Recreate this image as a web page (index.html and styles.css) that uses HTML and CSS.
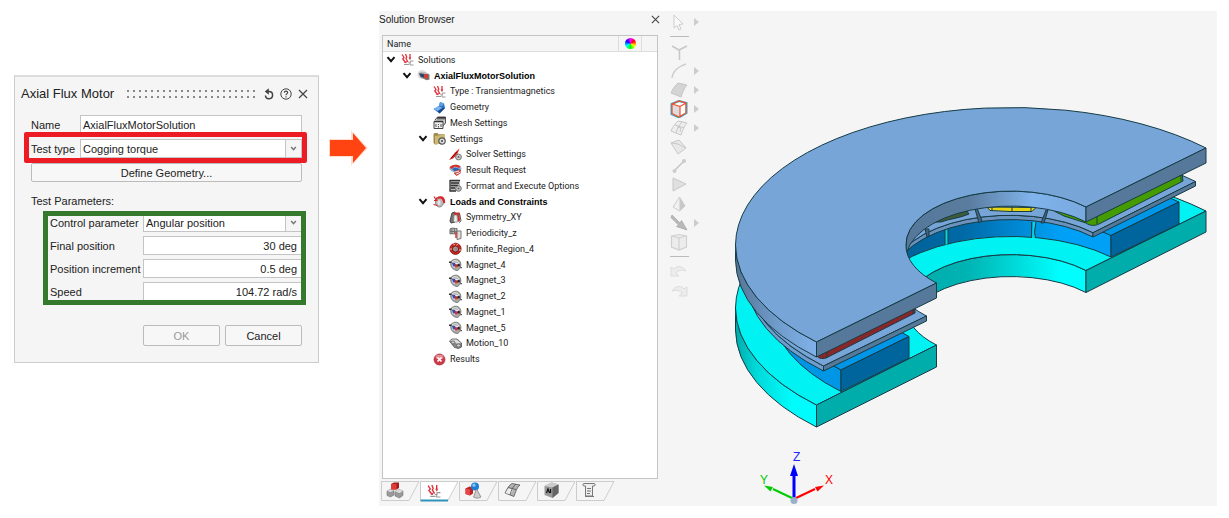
FILE: index.html
```html
<!DOCTYPE html>
<html lang="en">
<head>
<meta charset="utf-8">
<title>Axial Flux Motor</title>
<link rel="stylesheet" href="styles.css">
</head>
<body>
<svg class="defs" aria-hidden="true">
  <symbol id="i-chev" viewBox="0 0 8 6"><path d="M1 1l3 3.4L7 1" fill="none" stroke="#111" stroke-width="1.7"/></symbol>
  <symbol id="i-drop" viewBox="0 0 8 6"><path d="M1.2 1.2L4 4.4l2.800-3.200" fill="none" stroke="#777" stroke-width="1.800"/></symbol>
  <symbol id="i-close" viewBox="0 0 10 10"><path d="M1 1l8 8M9 1L1 9" fill="none" stroke="#444" stroke-width="1.200"/></symbol>
  <symbol id="i-wave" viewBox="0 0 13 13"><path d="M1 1.500l2 3-1.200 1.500L4.500 9.500M4.500 1l1.200 3-.7 1.500 2 3.500M9 1v5" fill="none" stroke="#e0303a" stroke-width="1.300"/><path d="M3 9.500l2.500.8.3-2.500M7.600 4.500L9 7l1.300-2.500z" fill="#e0303a"/><path d="M12.500 8H9.300v1.800h-2M12.500 12H9V10M3 11.500h5" fill="none" stroke="#999" stroke-width="1"/></symbol>
  <symbol id="i-motor" viewBox="0 0 13 13"><ellipse cx="5" cy="5.500" rx="4.500" ry="4.500" fill="#ddd"/><path d="M1.500 4l6-.5 5 2v5l-3 .8-6-3z" fill="#777"/><path d="M7 5l4 .5v4L7.500 9z" fill="#d83a2c"/><path d="M3 5l4 .3v3L3.500 7.500z" fill="#27407c"/><path d="M2 3l6 0 4 2-5 0z" fill="#bbb"/></symbol>
  <symbol id="i-geo" viewBox="0 0 13 13"><path d="M.5 8L6 5l1-4 4 1.500 1 4.500-5.500 5.500z" fill="#2b6fc4"/><path d="M.5 8L5.500 5l4 2-4.500 3z" fill="#7ab4ee"/><path d="M7 1l4 1.500-2 3-3-1z" fill="#5e9fe4"/><path d="M5 10l4.500-3L12 7l-5.500 5.500z" fill="#17458a"/></symbol>
  <symbol id="i-mesh" viewBox="0 0 13 13"><path d="M2 4l2.500-3H12.500v6L10 10" fill="#ccc" stroke="#555"/><path d="M4.500 1.500h8M4 2.800h8" stroke="#333"/><path d="M1 5.500h9v7H1z" fill="#eee" stroke="#444"/><path d="M1 5.500h9" stroke="#333" stroke-width="1.500"/><path d="M3 8v3M5.500 8v1M5.500 10v1.500M8 8v3" stroke="#555"/></symbol>
  <symbol id="i-folder" viewBox="0 0 13 13"><path d="M.5 2l1-1h3l1 1.200h6V11l-9.500 1.500L.5 11z" fill="#a08a4c"/><path d="M2 4l9.500-1.500V11L2 12.500z" fill="#cdb872"/><circle cx="9" cy="9" r="3.200" fill="#ddd" stroke="#555" stroke-width="1.200"/><circle cx="9" cy="9" r="1" fill="#444"/></symbol>
  <symbol id="i-solver" viewBox="0 0 13 13"><path d="M0 12l6-7.500L10.500.5 8 7l-4 3.500z" fill="#e02020"/><path d="M2 10l6-6" stroke="#8a1414"/><circle cx="9.500" cy="9" r="2.900" fill="#ccc" stroke="#777"/><circle cx="9.500" cy="9" r="1" fill="#666"/></symbol>
  <symbol id="i-result" viewBox="0 0 13 13"><ellipse cx="6.500" cy="4.500" rx="6" ry="3.800" fill="#9eb6d4"/><path d="M.5 3.500C3 0 9 0 11.500 2.500L10 4 6 2.500 2.500 5z" fill="#d8302e"/><path d="M3 5l3-1.500L11 5 9 7.500 5 7z" fill="#2f65b4"/><path d="M6 7l6-1.500-.5 4L7.500 12 5 9.500z" fill="#c9453c"/><path d="M6 8l4-1M7 10l4-1.500M1 6l3 3" stroke="#f0f0f0"/></symbol>
  <symbol id="i-format" viewBox="0 0 13 13"><path d="M1 1h10v11H1z" fill="#bbb"/><path d="M1 1.500h10M2 4h8M2 6.500h7M2 9h4M1 1v11h6" stroke="#333" stroke-width="1.300" fill="none"/><circle cx="9.500" cy="9.500" r="2.800" fill="#ccc" stroke="#666"/><circle cx="9.500" cy="9.500" r="1" fill="#555"/></symbol>
  <symbol id="i-loads" viewBox="0 0 13 13"><ellipse cx="6.500" cy="7" rx="4" ry="5" fill="#bbb" stroke="#888"/><path d="M1 1.500l2.500 4M1 5.500l3 0-.5-3M.5 9.500l4 1" stroke="#d8262c" fill="none" stroke-width="1.200"/><path d="M4 2.500c5-3 9 0 8 6l-2-1c0-3-2-5-5-3.500z" fill="#d8262c"/><ellipse cx="6" cy="7.500" rx="1.500" ry="2.500" fill="#e4e4e4"/></symbol>
  <symbol id="i-sym" viewBox="0 0 13 13"><path d="M1 10l2-8 3-1v10l-4 1z" fill="#777" stroke="#444"/><path d="M5 1.500h5.500l.5 8-2 1.500-1-7H5z" fill="#c9302c"/><path d="M5 4h3l.5 7H4.500z" fill="#eee" stroke="#777" stroke-width=".7"/><path d="M10.500 2l1.500 8-2 1.500" stroke="#555" fill="none"/></symbol>
  <symbol id="i-per" viewBox="0 0 13 13"><path d="M1 2c3-2 5 0 7-.5v5C5 7.500 3 6 1 7z" fill="#bbb" stroke="#666"/><path d="M3 2v5M5.500 2v4.500M1 4.500h7" stroke="#666" stroke-width=".8"/><path d="M8 4h4v7.500L8 12.500z" fill="#ddd" stroke="#777"/><path d="M7 5v6" stroke="#d33" stroke-width="1.500"/></symbol>
  <symbol id="i-inf" viewBox="0 0 13 13"><circle cx="6.500" cy="6.800" r="5.600" fill="#d8201f" stroke="#701010" stroke-width=".8"/><circle cx="6.500" cy="7" r="3" fill="#b9a0a0" stroke="#521"/><path d="M4 1.500L6 3M9 1.500L7.500 3.500M1 7h2M10 8h2" stroke="#fbb"/><path d="M5.500 5.500h2.500v3H5.500z" fill="#888"/></symbol>
  <symbol id="i-mag" viewBox="0 0 13 13"><path d="M2 3.500C5 0 10 .5 11.500 4.500c1 3-.5 7-3 8C4 12.500.5 8 2 3.500z" fill="#a8a8a8" stroke="#666" stroke-width=".8"/><path d="M3 4c2-2 6-1.500 7 1" stroke="#eee" fill="none"/><ellipse cx="6.500" cy="7" rx="3.500" ry="2.600" fill="#eee"/><path d="M3 5h3v3.500H4z" fill="#2a50c0"/><path d="M6 5.500l3 1.500-.5 2.500H6z" fill="#d8302c"/><path d="M8.500 6h2.300v2.500H8.500z" fill="#222"/><path d="M0 3.500h2.500v1.600H0zM11.500 9h1.300v1.300h-1.300z" fill="#333"/></symbol>
  <symbol id="i-motion" viewBox="0 0 13 13"><path d="M.5 4L3 2l5 0 4.500 4v4l-3 1.500-4-1z" fill="#888" stroke="#555" stroke-width=".8"/><path d="M1 4l2.500-1.500 4 0L12 6 9 7z" fill="#ddd"/><ellipse cx="4" cy="5.500" rx="2" ry="1.500" fill="#ccc" stroke="#555" stroke-width=".8"/><ellipse cx="9.500" cy="8.500" rx="2" ry="1.700" fill="#ccc" stroke="#555" stroke-width=".8"/></symbol>
  <symbol id="i-fail" viewBox="0 0 13 13"><circle cx="6.500" cy="6.500" r="5.500" fill="#cd3a48" stroke="#a62c3a" stroke-width=".7"/><ellipse cx="6.500" cy="4" rx="4" ry="2.300" fill="#e58b92"/><path d="M4.500 4.500l4 4M8.500 4.500l-4 4" stroke="#fff" stroke-width="1.700"/></symbol>
</svg>

<main class="page">
  <form class="dialog">
    <header class="dialog-head">
      <h1>Axial Flux Motor</h1>
      <span class="grip"></span>
      <button type="button" aria-label="Reset"><svg viewBox="0 0 12 12"><path d="M3 3.500h3a3.600 3.600 0 1 1-3.600 4" fill="none" stroke="#444" stroke-width="1.500"/><path d="M5.800.3v6.400L1.800 3.500z" fill="#444"/></svg></button>
      <button type="button" aria-label="Help"><svg viewBox="0 0 12 12"><circle cx="6" cy="6" r="5.200" fill="none" stroke="#444"/><path d="M4.300 4.800c0-2.300 3.400-2.200 3.400-.2C7.700 5.800 6 5.800 6 7.200M6 8.200v1.200" fill="none" stroke="#444" stroke-width="1.100"/></svg></button>
      <button type="button" aria-label="Close"><svg viewBox="0 0 12 12"><use href="#i-close" x="1" y="1" width="10" height="10"/></svg></button>
    </header>
    <div class="fields">
      <div class="row"><label for="name">Name</label><input id="name" value="AxialFluxMotorSolution"></div>
      <div class="row marked red">
        <label for="type">Test type</label>
        <span class="pick"><select id="type"><option>Cogging torque</option></select><svg><use href="#i-drop"/></svg></span>
      </div>
      <button type="button" class="btn">Define Geometry...</button>
    </div>
    <h2>Test Parameters:</h2>
    <div class="params marked green">
      <div class="row"><label for="ctl">Control parameter</label><span class="pick"><select id="ctl"><option>Angular position</option></select><svg><use href="#i-drop"/></svg></span></div>
      <div class="row"><label for="fin">Final position</label><input id="fin" class="num" value="30 deg"></div>
      <div class="row"><label for="inc">Position increment</label><input id="inc" class="num" value="0.5 deg"></div>
      <div class="row"><label for="spd">Speed</label><input id="spd" class="num" value="104.72 rad/s"></div>
    </div>
    <footer class="actions">
      <button type="button" class="btn" disabled>OK</button>
      <button type="button" class="btn">Cancel</button>
    </footer>
  </form>

  <svg class="arrow" viewBox="0 0 39 36" aria-hidden="true"><path d="M0 9h22V0l17 18-17 18V27H0z" fill="#ffdcd0"/><path d="M1 10h23V3l13 15-13 15v-7H1z" fill="#ff4412"/></svg>

  <section class="app">
    <aside class="browser">
      <header class="browser-head"><h2>Solution Browser</h2><button type="button" aria-label="Close browser"><svg viewBox="0 0 10 10"><use href="#i-close"/></svg></button></header>
      <div class="tree-box">
        <div class="tree-head"><span>Name</span><span class="cell"><i class="wheel"></i></span><span class="cell last"></span></div>
        <ul class="tree" role="tree">
          <li class="l0"><button type="button" aria-label="Toggle"><svg><use href="#i-chev"/></svg></button><svg class="ic"><use href="#i-wave"/></svg>Solutions</li>
          <li class="l1"><button type="button" aria-label="Toggle"><svg><use href="#i-chev"/></svg></button><svg class="ic"><use href="#i-motor"/></svg><b>AxialFluxMotorSolution</b></li>
          <li class="l2 leaf"><svg class="ic"><use href="#i-wave"/></svg>Type : Transientmagnetics</li>
          <li class="l2 leaf"><svg class="ic"><use href="#i-geo"/></svg>Geometry</li>
          <li class="l2 leaf"><svg class="ic"><use href="#i-mesh"/></svg>Mesh Settings</li>
          <li class="l2"><button type="button" aria-label="Toggle"><svg><use href="#i-chev"/></svg></button><svg class="ic"><use href="#i-folder"/></svg>Settings</li>
          <li class="l3 leaf"><svg class="ic"><use href="#i-solver"/></svg>Solver Settings</li>
          <li class="l3 leaf"><svg class="ic"><use href="#i-result"/></svg>Result Request</li>
          <li class="l3 leaf"><svg class="ic"><use href="#i-format"/></svg>Format and Execute Options</li>
          <li class="l2"><button type="button" aria-label="Toggle"><svg><use href="#i-chev"/></svg></button><svg class="ic"><use href="#i-loads"/></svg><b>Loads and Constraints</b></li>
          <li class="l3 leaf"><svg class="ic"><use href="#i-sym"/></svg>Symmetry_XY</li>
          <li class="l3 leaf"><svg class="ic"><use href="#i-per"/></svg>Periodicity_z</li>
          <li class="l3 leaf"><svg class="ic"><use href="#i-inf"/></svg>Infinite_Region_4</li>
          <li class="l3 leaf"><svg class="ic"><use href="#i-mag"/></svg>Magnet_4</li>
          <li class="l3 leaf"><svg class="ic"><use href="#i-mag"/></svg>Magnet_3</li>
          <li class="l3 leaf"><svg class="ic"><use href="#i-mag"/></svg>Magnet_2</li>
          <li class="l3 leaf"><svg class="ic"><use href="#i-mag"/></svg>Magnet_1</li>
          <li class="l3 leaf"><svg class="ic"><use href="#i-mag"/></svg>Magnet_5</li>
          <li class="l3 leaf"><svg class="ic"><use href="#i-motion"/></svg>Motion_10</li>
          <li class="l2 leaf"><svg class="ic"><use href="#i-fail"/></svg>Results</li>
        </ul>
      </div>
      <nav class="tabs">
        <button type="button" aria-label="Parts"><svg viewBox="0 0 39 21"><path class="edge" d="M0 .5h38L28 19.500H.5V.5"/><path d="M10 3l3-1.500h5V7l-2.500 1.500H10z" fill="#a51c1c"/><path d="M10 3h5.500v5.500H10z" fill="#df3a3a"/><path d="M6 10l3-1.500 4 1V14l-3.500 2L6 14.500zM14 10.500l4-2 4 1.500v4.500L18.500 17 14 15z" fill="#999" stroke="#777" stroke-width=".6"/><path d="M6 10l3-1.500 4 1-3.500 1.500zM14 10.500l4-2 4 1.500-3.500 2z" fill="#ddd"/></svg></button>
        <button type="button" aria-label="Solutions" class="on"><svg viewBox="0 0 39 21"><path class="edge" d="M0 .5h38L28 19.500H.5V.5"/><path d="M.5 19.500H28" stroke="#2e93b8" stroke-width="2"/><use href="#i-wave" x="7" y="3" width="14" height="14"/></svg></button>
        <button type="button" aria-label="Shapes"><svg viewBox="0 0 39 21"><path class="edge" d="M0 .5h38L28 19.500H.5V.5"/><path d="M6.500 7.500l4-2 3.500 1v6l-3 2-4.500-1.500z" fill="#c02020"/><path d="M6.500 7.500l4.500 1v6l-4.500-1.500z" fill="#e34848"/><circle cx="16" cy="5.500" r="4" fill="#1f7fd6"/><circle cx="15" cy="4.200" r="1.600" fill="#8cc6f6"/><path d="M17.500 8l4.500 8c-2 1.500-5.500 1.500-7.500 0z" fill="#ccc" stroke="#777" stroke-width=".7"/></svg></button>
        <button type="button" aria-label="Surfaces"><svg viewBox="0 0 39 21"><path class="edge" d="M0 .5h38L28 19.500H.5V.5"/><path d="M7 12c2-4 4-8 7-9.500L22 4c-3 2-4.500 7-6 11.500z" fill="#b4b4b4" stroke="#555" stroke-width=".8"/><path d="M7.500 12l5 1.500L15 8.500l-4.500-1.500z" fill="#eee"/><path d="M18 3c-3 2-5 7-6 11M10 6.500l8 2" stroke="#555" stroke-width=".8" fill="none"/></svg></button>
        <button type="button" aria-label="Block"><svg viewBox="0 0 39 21"><path class="edge" d="M0 .5h38L28 19.500H.5V.5"/><path d="M7.500 5l7-3.500 7 2v8.500l-6 5-8-3z" fill="#999"/><path d="M7.500 5l7-3.500 7 2-6 3z" fill="#ccc"/><path d="M15.500 6.500l6-3V12l-6 5z" fill="#666"/><path d="M9.500 12l1.500-4 1.500 4M13.500 8v4" stroke="#111" stroke-width="1.200" fill="none"/></svg></button>
        <button type="button" aria-label="Script"><svg viewBox="0 0 39 21"><path class="edge" d="M0 .5h38L28 19.500H.5V.5"/><path d="M8 2.500h10c1.500 0 1.500 2.500 0 2.500h-1.500v10H9.500V5H8c-1.500 0-1.500-2.500 0-2.500z" fill="#eee" stroke="#777"/><path d="M11 7.500h4M11 10h4M11 12.500h3M9 15.500h9" stroke="#777" stroke-width="1"/></svg></button>
      </nav>
    </aside>

    <nav class="tools">
      <button type="button" class="more" aria-label="Select"><svg viewBox="0 0 18 18"><path d="M4 2v13l3-2.500L9 17l2-1-2-4.500 4-.5z" fill="#fafafa" stroke="#ccc"/></svg></button>
      <hr>
      <button type="button" aria-label="Vertex"><svg viewBox="0 0 18 18"><path d="M2 3l7 4L17 3M9.500 7v10" fill="none" stroke="#c8c8c8" stroke-width="1.600"/></svg></button>
      <button type="button" class="more" aria-label="Curve"><svg viewBox="0 0 18 18"><path d="M2 16C3 9 9 4 16 2" fill="none" stroke="#ccc" stroke-width="1.500"/></svg></button>
      <button type="button" class="more" aria-label="Face"><svg viewBox="0 0 18 18"><path d="M1 12C3 7 5 5 8 2l9 2c-3 3-4 7-6 12z" fill="#d4d4d4" stroke="#c6c6c6"/></svg></button>
      <button type="button" class="more" aria-label="Solid"><svg viewBox="0 0 18 18"><path d="M1.500 4L9 1l7.500 2v10L9 17.500 1.500 14z" fill="#fff" stroke="#39a9c8" stroke-width="2"/><path d="M2 4l8 2.500V17l-8-3z" fill="#ddd"/><path d="M2 4l7-3 7 2v10l-7 4-7-3.500zM2 4l8 2.500V17M10 6.500L16 3" fill="none" stroke="#f0502e" stroke-width="1.200"/></svg></button>
      <button type="button" class="more" aria-label="Faces"><svg viewBox="0 0 18 18"><path d="M1 12C3 7 5 5 8 2l9 2c-3 3-4 7-6 12z" fill="#eee" stroke="#c8c8c8"/><path d="M5 6l9 3M12 3C9 6 7 10 6 14M7 8l4 1-1 4" fill="none" stroke="#c8c8c8"/></svg></button>
      <button type="button" aria-label="Quad"><svg viewBox="0 0 18 18"><path d="M1 5l8-3 7 8-8 6z" fill="#e8e8e8" stroke="#c8c8c8"/><path d="M1 5l7 1 8 4" fill="none" stroke="#c8c8c8"/></svg></button>
      <button type="button" aria-label="Line"><svg viewBox="0 0 18 18"><path d="M4 14L14 4" stroke="#c4c4c4" stroke-width="1.500"/><circle cx="4.500" cy="14" r="2" fill="#ccc"/><circle cx="14" cy="4" r="2" fill="#ccc"/></svg></button>
      <button type="button" aria-label="Triangle"><svg viewBox="0 0 18 18"><path d="M3 2l13 6-13 7z" fill="#e0e0e0" stroke="#c8c8c8"/></svg></button>
      <button type="button" aria-label="Pyramid"><svg viewBox="0 0 18 18"><path d="M9.500 2L3 12l6.500 4 5.500-5z" fill="#f0f0f0" stroke="#ccc"/><path d="M9.500 2v14l5.500-5z" fill="#c8c8c8"/></svg></button>
      <button type="button" class="more" aria-label="Arrow"><svg viewBox="0 0 18 18"><path d="M2 1l8 8 1.500-2.500L17 16 6.500 12.500 8.500 11 1 3.500z" fill="#b9b9b9" stroke="#a8a8a8" stroke-width=".8"/></svg></button>
      <button type="button" aria-label="Box"><svg viewBox="0 0 18 18"><path d="M1.500 3L9 1.500 16.500 3v11L9 17l-7.500-3zM1.500 3L9 5v12M9 5l7.500-2" fill="#ececec" stroke="#d0d0d0" stroke-width="1.200"/></svg></button>
      <hr>
      <button type="button" aria-label="Undo"><svg viewBox="0 0 18 18"><path d="M1 4v9h8L6 10c2-3 6-3 10-2C13 3 7 2 4 6z" fill="#ececec" stroke="#ddd"/></svg></button>
      <button type="button" aria-label="Redo"><svg viewBox="0 0 18 18"><path d="M17 5v9H9l3-3c-2-3-6-3-10-2 3-5 9-6 12-2z" fill="#ececec" stroke="#ddd"/></svg></button>
    </nav>

    <svg class="model" viewBox="700 11 517 495" role="img" aria-label="Axial flux motor model">
      <defs>
        <linearGradient id="g-co" x1="735" x2="817" y1="0" y2="0" gradientUnits="userSpaceOnUse"><stop offset="0" stop-color="#00a8a8"/><stop offset=".25" stop-color="#00d8d8"/><stop offset=".7" stop-color="#00fcfc"/></linearGradient>
        <linearGradient id="g-ci" x1="920" x2="1060" y1="0" y2="0" gradientUnits="userSpaceOnUse"><stop offset="0" stop-color="#00acac"/><stop offset=".35" stop-color="#00b4b4"/><stop offset="1" stop-color="#00fefe"/></linearGradient>
        <linearGradient id="g-to" x1="735" x2="817" y1="0" y2="0" gradientUnits="userSpaceOnUse"><stop offset="0" stop-color="#557596"/><stop offset=".5" stop-color="#6f9bca"/><stop offset="1" stop-color="#80b2ea"/></linearGradient>
        <linearGradient id="g-ti" x1="906" x2="1086" y1="0" y2="0" gradientUnits="userSpaceOnUse"><stop offset="0" stop-color="#557799"/><stop offset=".35" stop-color="#5a7c9f"/><stop offset=".7" stop-color="#80b4ec"/><stop offset="1" stop-color="#78a8de"/></linearGradient>
        <linearGradient id="g-mi" x1="910" x2="1060" y1="0" y2="0" gradientUnits="userSpaceOnUse"><stop offset="0" stop-color="#00639a"/><stop offset=".35" stop-color="#0069a6"/><stop offset="1" stop-color="#00a0f6"/></linearGradient>
      </defs>
      <g stroke="#173c46" stroke-width="1" stroke-linejoin="round">
        <!-- base ring -->
        <path fill="url(#g-co)" d="M735.500 308A275.500 138 0 0 0 816.500 405V427A275.500 138 0 0 1 735.500 330z"/>
        <path fill="url(#g-ci)" d="M906 308A105 53 0 0 1 1086 270.500V292.500A105 53 0 0 0 906 330z"/>
        <path fill="#00f2f2" d="M816.500 405A275.500 138 0 0 1 735.500 308A275.500 138 0 0 1 1206 211L1086 270.500A105 53 0 0 0 906 308A105 53 0 0 0 936.500 345z"/>
        <path fill="#00adab" d="M816.500 405L936.500 345V367L816.500 427zM1086 270.500L1206 211V232L1086 292.500z"/>
        <!-- magnets -->
        <path fill="#0096e6" d="M771 287A240 120 0 0 0 841 370V391.500A240 120 0 0 1 771 308z"/>
        <path fill="url(#g-mi)" d="M868 287A143 72 0 0 1 1111 235V257A143 72 0 0 0 868 308z"/>
        <path fill="#0096e8" d="M841 370A240 120 0 0 1 771 287A240 120 0 0 1 1179 202L1111 235.500A143 72 0 0 0 868 287A143 72 0 0 0 909 336.500z"/>
        <path fill="#00659c" d="M841 370L909 336.500V358L841 391.500zM1111 235.500L1179 202V224L1111 257z"/>
        <path fill="#00d8dc" stroke="none" d="M945 229h3v15l-3 1zM1033 222h2.500l-1 10 1.500 6h-4z"/>
        <path fill="none" d="M945 225v20M948 225v19M1031.500 222v15.500M1036 222l-1.500 10 1 6"/>
        <!-- stator shoes -->
        <path fill="#6f9ccd" d="M746 274A264 132 0 0 0 823.500 366V371A264 132 0 0 1 746 278.500z"/>
        <path fill="#6a92bf" d="M893 274A117 59 0 0 1 1093 232.700V237A117 59 0 0 0 893 278.500z"/>
        <path fill="#78a5d8" d="M823.500 366A264 132 0 0 1 746 274A264 132 0 0 1 1195.500 181.500L1093 232.700A117 59 0 0 0 893 274A117 59 0 0 0 926.500 316z"/>
        <path fill="#567899" d="M823.500 366L926.500 316V321L823.500 371zM1093 232.700L1195.500 181.500V186L1093 237z"/>
        <path fill="#45637f" d="M975 209l4 14 3-2-5-13zM1046 210l-5 13h3l4-13zM925 229l2 8 2-1 0-7z"/>
        <!-- coils -->
        <path fill="#3c5a3c" d="M935 222c9-6 20-9 32-11l2 3c-9 4-20 5-28 8z"/>
        <path fill="#e6d414" d="M987 207l3 3.500 20 1h22l4-4z"/><path fill="none" d="M992 207v4M1012 207v4M1031 207v4"/>
        <path fill="#449c00" d="M1054 211l10 5 22 7c4 3 9 3 13 1l84-43-1-9-96 43z"/><path fill="none" d="M1097 215v9M1181 174v7"/>
        <path fill="#8a2628" d="M818 351l97-48v10l-89 45c-4 1-8 1-9-3z"/><path fill="none" d="M827 350v8M913 305v9"/>
        <!-- top plate -->
        <path fill="url(#g-to)" d="M735.500 245A275.500 138 0 0 0 816.500 342V357A275.500 138 0 0 1 735.500 260z"/>
        <path fill="url(#g-ti)" d="M906 245A105 53 0 0 1 1086 207V222A105 53 0 0 0 906 260z"/>
        <path fill="#77a5d7" d="M816.500 342A275.500 138 0 0 1 735.500 245A275.500 138 0 0 1 1206 148L1086 207A105 53 0 0 0 906 245A105 53 0 0 0 936.500 283z"/>
        <path fill="#56789b" d="M816.500 342L936.500 283V298L816.500 357zM1086 207L1206 148V163L1086 222z"/>
      </g>
      <g stroke-width="2" fill="none">
        <path d="M794 499L815 489" stroke="#f00"/><path d="M794 499L773 489" stroke="#0c0"/><path d="M794 499V474" stroke="#00f" stroke-width="3"/>
      </g>
      <path d="M824 485.500l-9 1.500 2.500 4.500z" fill="#f00"/><path d="M764 485.500l9 1.500-2.500 4.500z" fill="#0c0"/><path d="M794 464l4 12h-8z" fill="#00f"/>
      <circle cx="794" cy="500.500" r="3.500" fill="#9ab0c8"/>
      <g class="axis"><text x="825" y="484" fill="#f00">X</text><text x="760" y="484" fill="#0c0">Y</text><text x="793" y="461" fill="#22f">Z</text></g>
    </svg>
  </section>
</main>
</body>
</html>
```
FILE: styles.css
```css
* { box-sizing: border-box; }
body { margin: 0; background: #fff; color: #222; font: 11px/14px "Liberation Sans", Arial, sans-serif; }
h1, h2, ul { margin: 0; padding: 0; font-weight: 400; }
h2 { font-size: 11px; }
button { font: inherit; color: inherit; margin: 0; padding: 0; border: 0; background: none; }
.defs { position: absolute; width: 0; height: 0; }
.page { display: flex; align-items: flex-start; padding: 11px 12px 12px 14px; }

.dialog { flex: none; width: 305px; margin-top: 64px; padding: 8px 16px 16px; background: #f5f5f5; border: 1px solid #ccc; border-top: 2px solid #ddd; }
.dialog-head { display: flex; align-items: center; gap: 5px; height: 18px; margin: 0 -7px 0 -10px; }
.dialog-head h1 { font-size: 13px; white-space: nowrap; }
.dialog-head button { display: flex; flex: none; }
.dialog-head svg { width: 12px; height: 12px; }
.grip { flex: 1; height: 12px; margin: 0 2px 0 6px; background: radial-gradient(circle, #888 1px, transparent 1px) 0 0 / 6px 6px; }
.fields { display: flex; flex-direction: column; gap: 5px; margin: 12px 0; }
.row { display: grid; grid-template-columns: 49px 1fr; align-items: center; height: 19px; white-space: nowrap; }
.row input, .row select { width: 100%; height: 19px; margin: 0; padding: 0 2px; border: 1px solid #c4c4c4; border-radius: 0; background: #fff; color: #222; font: inherit; outline: 0; appearance: none; }
.row .num { text-align: right; padding-right: 4px; }
.pick { position: relative; display: block; }
.row .pick select { display: block; }
.pick svg { position: absolute; right: 0; top: 0; width: 17px; height: 19px; padding: 6px 4px; border: 1px solid #c4c4c4; background: #f5f5f5; pointer-events: none; }
.btn { height: 19px; border: 1px solid #bbb; border-radius: 2px; background: #f7f7f7; }
.btn:disabled { color: #999; }
.marked { position: relative; }
.marked::after { content: ""; position: absolute; border: 5px solid #ed1c24; pointer-events: none; }
.red::after { inset: -7px -5px -5px -7px; border-radius: 2px; }
.green::after { inset: -2px -4px -4px -7px; border-color: #35792f; }
.params { display: grid; gap: 4px; margin: 5px 0 24px 19px; }
.params .row { grid-template-columns: 93px 1fr; }
.actions { display: flex; justify-content: flex-end; gap: 5px; }
.actions .btn { width: 77px; height: 21px; }

.arrow { flex: none; width: 39px; height: 36px; margin: 119px 11px 0 10px; }

.app { flex: 1; display: flex; min-width: 0; background: #f5f5f5; }
.browser { flex: none; width: 283px; padding-left: 2px; }
.browser-head { display: flex; justify-content: space-between; align-items: center; height: 17px; margin: 0 2px 7px -2px; }
.browser-head h2 { font-size: 10px; }
.browser-head svg { display: block; width: 9px; height: 9px; }
.tree-box { width: 276px; height: 444px; margin-left: 1px; background: #fff; border: 1px solid #c4c4c4; font: 9px/14px Roboto, "Liberation Sans", sans-serif; }
.tree-box b { font-family: "Liberation Sans", Arial, sans-serif; color: #000; }
.tree-head { display: flex; align-items: center; height: 16px; padding-left: 4px; background: #f5f5f5; border-bottom: 1px solid #ddd; }
.tree-head span:first-child { flex: 1; }
.cell { display: grid; place-items: center; width: 23px; height: 16px; border-left: 1px solid #ddd; }
.last { width: 16px; }
.wheel { width: 11px; height: 11px; border-radius: 50%; background: conic-gradient(#f0f, #f00, #ff0, #0f0, #0ff, #00f, #f0f); }
.tree { display: grid; grid-auto-rows: 1fr; height: 315px; padding-left: 3px; list-style: none; }
.tree li { display: flex; align-items: center; white-space: nowrap; }
.tree button { display: flex; width: 10px; }
.tree button svg { width: 10px; height: 7px; }
.tree .ic { width: 13px; height: 13px; margin: 0 4px 0 5px; }
.leaf { margin-left: 10px; }
.l1 { padding-left: 16px; }
.l2 { padding-left: 32px; }
.l3 { padding-left: 48px; }
.tabs { display: flex; margin-top: 2px; }
.tabs svg { display: block; width: 39px; height: 21px; }
.edge { fill: none; stroke: #ccc; }
.on .edge { fill: #fff; }

.tools { flex: none; display: flex; flex-direction: column; width: 38px; padding: 1px 0 0 8px; }
.tools button { display: flex; align-items: center; gap: 6px; height: 19px; }
.tools svg { width: 18px; height: 18px; }
.tools .more::after { content: ""; border: 4px solid transparent; border-left: 5px solid #ccc; border-right: 0; }
.tools hr { width: 19px; height: 1px; margin: 5px 0; border: 0; background: #bbb; }
.model { flex: 1; min-width: 0; }
.axis { font: 12px "Liberation Sans", Arial, sans-serif; }
```
